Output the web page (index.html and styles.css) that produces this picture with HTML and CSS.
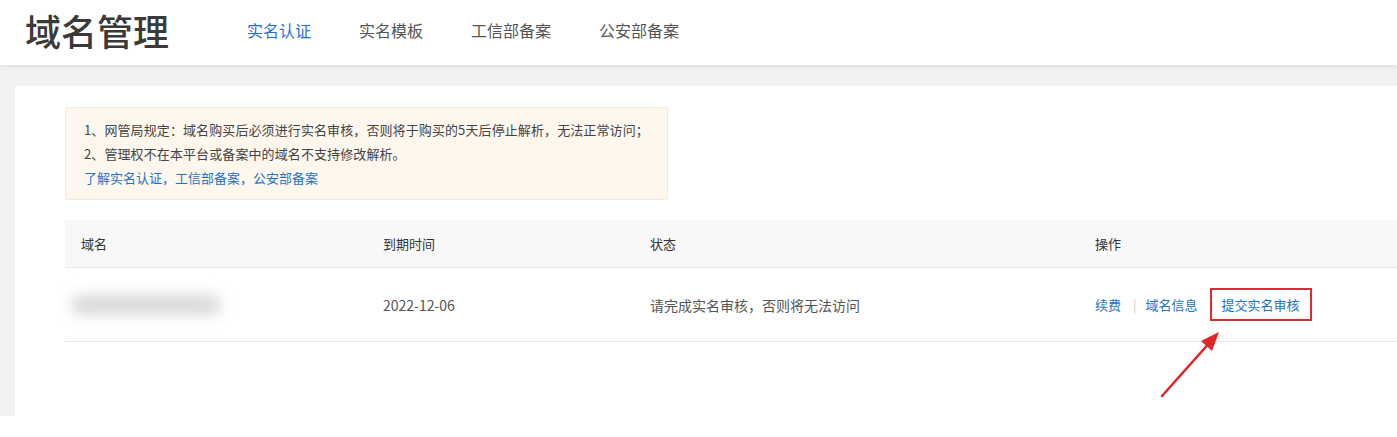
FILE: index.html
```html
<!DOCTYPE html>
<html lang="zh-CN">
<head>
    <meta charset="UTF-8">
    <title>域名管理</title>
    <link rel="stylesheet" href="styles.css">
</head>
<body>
<div class="header">
    <h1 class="header--title">域名管理</h1>
    <ul class="header--nav">
        <li class="active">实名认证</li>
        <li>实名模板</li>
        <li>工信部备案</li>
        <li>公安部备案</li>
    </ul>
</div>

<div class="main">
    <div class="card">
        <div class="notice">
            <p>1、网管局规定：域名购买后必须进行实名审核，否则将于购买的5天后停止解析，无法正常访问；</p>
            <p>2、管理权不在本平台或备案中的域名不支持修改解析。</p>
            <p><a href="#">了解实名认证，工信部备案，公安部备案</a></p>
        </div>

        <div class="table">
            <div class="table--row table--head">
                <div>域名</div>
                <div>到期时间</div>
                <div>状态</div>
                <div>操作</div>
            </div>
            <div class="table--row table--body">
                <div><span class="blurred"></span></div>
                <div>2022-12-06</div>
                <div>请完成实名审核，否则将无法访问</div>
                <div class="actions">
                    <a href="#">续费</a>
                    <span class="sep">|</span>
                    <a href="#">域名信息</a>
                    <a href="#" class="highlight">提交实名审核</a>
                </div>
            </div>
        </div>

        <!-- 标注箭头 -->
        <svg class="arrow" width="80" height="90" viewBox="0 0 80 90">
            <line x1="12" y1="84" x2="62" y2="28" stroke="#e0252d" stroke-width="2.6" stroke-linecap="round"/>
            <polygon points="69,20 51,29 62,39" fill="#e0252d"/>
        </svg>
    </div>
</div>
</body>
</html>
```

FILE: styles.css
```css
*, *:before, *:after {
    box-sizing: border-box;
    padding: 0;
    margin: 0;
}

body {
    background: #fff;
    overflow: hidden;
    font-family: "Noto Sans CJK SC", "Noto Sans", sans-serif;
    color: #333;
}

a {
    color: #2473c6;
    text-decoration: none;
}

.header {
    height: 65px;
    display: flex;
    align-items: center;
    padding-left: 25px;
    background: #fff;
    box-shadow: 0 2px 4px rgba(0, 0, 0, 0.08);
    position: relative;
    z-index: 2;
}

.header--title {
    font-size: 36px;
    font-weight: 500;
    color: #3a3a3a;
    margin-top: -6px;
}

.header--nav {
    list-style: none;
    display: flex;
    gap: 48px;
    margin-left: 78px;
    margin-top: -6px;
}

.header--nav li {
    font-size: 16px;
    color: #555;
}

.header--nav li.active {
    color: #1f6fd3;
}

.main {
    background: #f2f2f4;
    padding: 21px 0 0 15px;
    height: 351px;
}

.card {
    background: #fff;
    height: 330px;
    padding: 21px 0 0 50px;
    position: relative;
}

.notice {
    width: 603px;
    background: #fdf7ee;
    border: 1px solid #f5ead9;
    border-radius: 2px;
    padding: 10px 18px 9px;
    font-size: 13px;
    line-height: 24px;
    color: #444;
    letter-spacing: 0.1px;
    white-space: nowrap;
}

.notice a {
    letter-spacing: 0;
}

.table {
    margin-top: 20px;
    font-size: 13px;
}

.table--row {
    display: grid;
    grid-template-columns: 302px 267px 445px 1fr;
    align-items: center;
    height: 74px;
    border-bottom: 1px solid #e6e6e6;
    color: #555;
}

.table--row > div {
    padding-left: 16px;
}

.table--head {
    height: 48px;
    background: #f8f8f8;
    color: #333;
}

.table--body {
    font-size: 14px;
}

.blurred {
    display: block;
    width: 150px;
    height: 20px;
    margin-left: -10px;
    background: #d9d9d9;
    border-radius: 10px;
    filter: blur(7px);
}

.actions {
    display: flex;
    align-items: center;
    font-size: 13px;
}

.sep {
    color: #ccc;
    margin: 0 9px 0 12px;
}

.highlight {
    margin-left: 12px;
    padding: 5px 10px;
    border: 2.5px solid #dc2a30;
}

.arrow {
    position: absolute;
    left: 1135px;
    top: 226px;
}
```
